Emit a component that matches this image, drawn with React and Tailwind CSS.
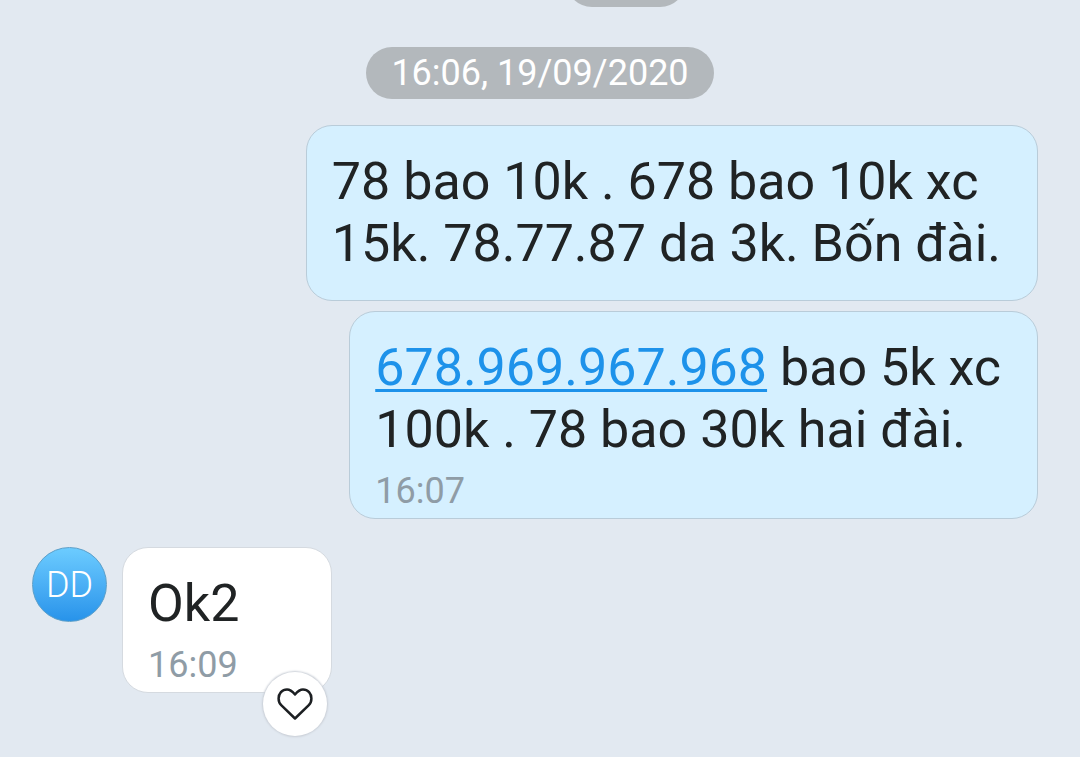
const bubble = "w-fit rounded-[26px] border border-[#b9ccd9] bg-[#d5f0ff] pt-[25px] pr-9 pl-[25px]";
const message = "text-[52px] leading-[62px]";
const stamp = "block pt-[5px] pb-0.5 text-4xl leading-[50px] text-[#8f9ca6]";

function HeartButton() {
  return (
    <button
      type="button"
      aria-label="React with a heart"
      className="absolute right-1 -bottom-11 flex size-16 items-center justify-center rounded-full bg-white shadow-[0_0_2px_1px_#c9ced6]"
    >
      <svg viewBox="0 0 36 32" className="h-8 w-9" fill="none" stroke="#1c1f22" strokeWidth="2.5" strokeLinejoin="round">
        <path d="M18 30.500L4.200 17.200C2.200 15.200 1.600 12.700 1.600 10.500C1.600 5.500 5 1.500 10 1.500C13.500 1.500 15.500 3.500 18 6.500C20.500 3.500 22.500 1.500 26 1.500C31 1.500 34.400 5.500 34.400 10.500C34.400 12.700 33.800 15.200 31.800 17.200Z" />
      </svg>
    </button>
  );
}

export default function App() {
  return (
    <main className="flex min-h-screen flex-col overflow-hidden bg-[#e2e9f1] font-['Roboto',sans-serif] text-[#202324]">
      <div className="flex h-[7px] flex-col justify-end self-center overflow-hidden pl-[172px]">
        <div className="h-[52px] w-[120px] shrink-0 rounded-full bg-[#b3b8bc]" />
      </div>
      <time className="mt-10 self-center rounded-full bg-[#b3b8bc] px-[25px] py-1.5 text-4xl text-white">16:06, 19/09/2020</time>
      <section className="mt-[26px] mr-[42px] flex flex-col items-end gap-2.5">
        <div className={`${bubble} pb-[25px]`}>
          <p className={message}>
            78 bao 10k . 678 bao 10k xc<br />15k. 78.77.87 da 3k. Bốn đài.
          </p>
        </div>
        <div className={bubble}>
          <p className={message}>
            <a href="tel:678969967968" className="text-[#1d92ea] underline decoration-[3px] underline-offset-4">678.969.967.968</a> bao 5k xc<br />100k . 78 bao 30k hai đài.
          </p>
          <time className={stamp}>16:07</time>
        </div>
      </section>
      <section className="mt-7 ml-8 flex items-start gap-[15px]">
        <div className="flex size-[75px] items-center justify-center rounded-full border border-[#5c9fc9] bg-linear-to-b from-[#6cccff] to-[#2793ea] text-4xl font-light text-white">DD</div>
        <div className="relative w-[210px] rounded-[26px] border border-[#d5dae0] bg-white px-[25px] pt-[25px]">
          <p className={message}>Ok2</p>
          <time className={stamp}>16:09</time>
          <HeartButton />
        </div>
      </section>
    </main>
  );
}
